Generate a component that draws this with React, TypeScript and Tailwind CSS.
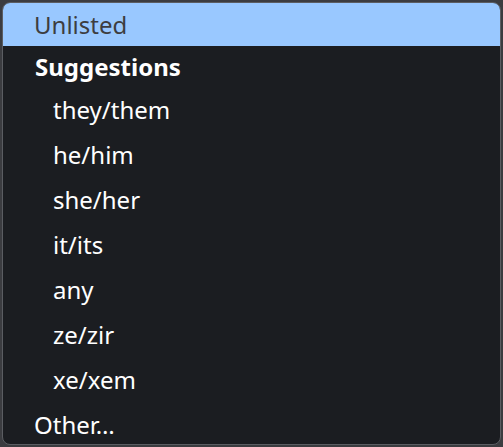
const groupOptions = ["they/them", "he/him", "she/her", "it/its", "any", "ze/zir", "xe/xem"];

export default function App() {
  return (
    <div
      className="w-[503px] h-[447px] bg-[#3b3c40] pt-[2px] px-[2px] pb-[2px]"
      style={{ fontFamily: '"Noto Sans", "Open Sans", sans-serif' }}
    >
      <div className="h-full rounded-[8px] border border-[#5b5d62] bg-[#1b1d21] overflow-hidden flex flex-col text-[24px] leading-none">
        <div className="h-[43px] shrink-0 bg-[#99c8ff] text-[#3d3d40] pl-[31px] flex items-center">Unlisted</div>
        <div className="h-[41px] shrink-0 pl-[32px] flex items-center font-bold text-white">Suggestions</div>
        {groupOptions.map((o) => (
          <div key={o} className="h-[45px] shrink-0 pl-[50px] flex items-center text-white">
            {o}
          </div>
        ))}
        <div className="h-[45px] shrink-0 pl-[31px] flex items-center text-white">Other…</div>
      </div>
    </div>
  );
}
